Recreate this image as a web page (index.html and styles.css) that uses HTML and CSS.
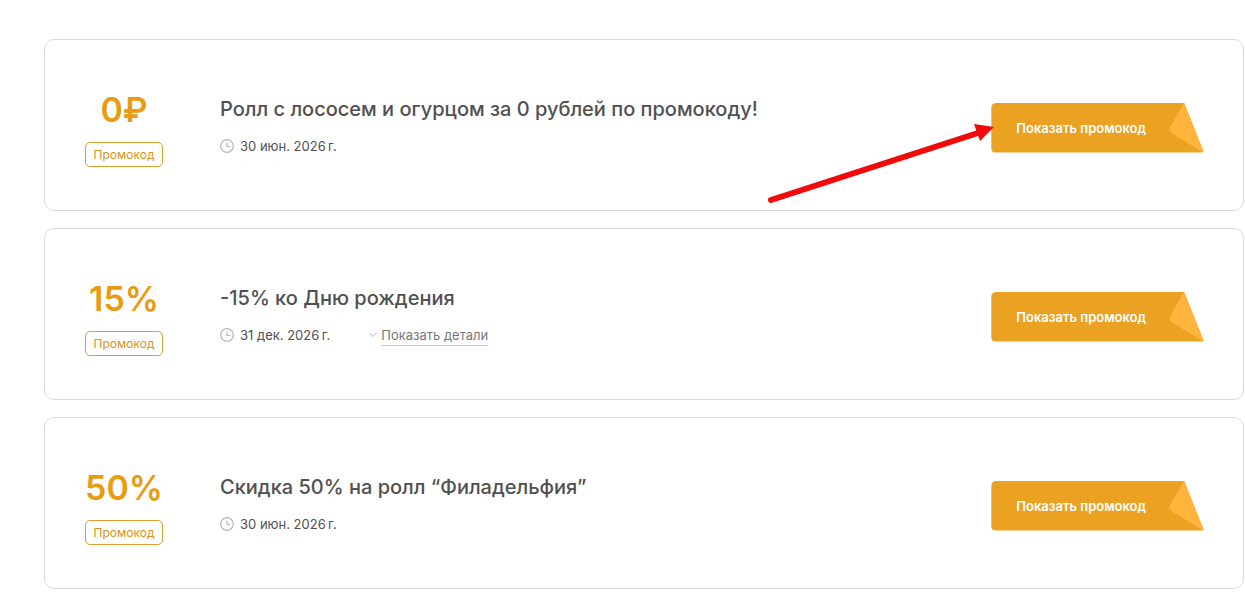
FILE: index.html
```html
<!DOCTYPE html>
<html lang="ru">
	<head>
		<meta charset="utf-8">
		<title>Промокоды</title>
		<link rel="stylesheet" href="styles.css">
	</head>
	<body>
		<main class="coupons">
			<article class="coupon">
				<div class="discount">
					<div class="amount">0₽</div>
					<div class="type">Промокод</div>
				</div>
				<div class="info">
					<h2 class="title">Ролл с лососем и огурцом за 0 рублей по промокоду!</h2>
					<div class="meta">
						<svg class="clock" viewBox="0 0 14 14"><circle cx="7" cy="7" r="6.3"/><path d="M7 3.5V7.5H10"/></svg>
						<span class="date">30 июн. 2026&#8239;г.</span>
					</div>
				</div>
				<div class="action">
					<button class="show" type="button">Показать промокод<svg class="fold" viewBox="0 0 35 50"><path d="M15 0L1 24Q-1 28 4 31L35 50Z"/></svg></button>
					<svg class="arrow" viewBox="0 0 230 84"><path class="line" d="M6 79L216 11"/><path class="head" d="M209 3L229 6L215 20Z"/></svg>
				</div>
			</article>
			<article class="coupon">
				<div class="discount">
					<div class="amount">15%</div>
					<div class="type">Промокод</div>
				</div>
				<div class="info">
					<h2 class="title">-15% ко Дню рождения</h2>
					<div class="meta">
						<svg class="clock" viewBox="0 0 14 14"><circle cx="7" cy="7" r="6.3"/><path d="M7 3.5V7.5H10"/></svg>
						<span class="date">31 дек. 2026&#8239;г.</span>
						<a class="details" href="#"><svg class="chevron" viewBox="0 0 8 6"><path d="M0.5 1L4 4.5L7.5 1"/></svg><span class="underline">Показать детали</span></a>
					</div>
				</div>
				<div class="action">
					<button class="show" type="button">Показать промокод<svg class="fold" viewBox="0 0 35 50"><path d="M15 0L1 24Q-1 28 4 31L35 50Z"/></svg></button>
				</div>
			</article>
			<article class="coupon">
				<div class="discount">
					<div class="amount">50%</div>
					<div class="type">Промокод</div>
				</div>
				<div class="info">
					<h2 class="title">Скидка 50% на ролл “Филадельфия”</h2>
					<div class="meta">
						<svg class="clock" viewBox="0 0 14 14"><circle cx="7" cy="7" r="6.3"/><path d="M7 3.5V7.5H10"/></svg>
						<span class="date">30 июн. 2026&#8239;г.</span>
					</div>
				</div>
				<div class="action">
					<button class="show" type="button">Показать промокод<svg class="fold" viewBox="0 0 35 50"><path d="M15 0L1 24Q-1 28 4 31L35 50Z"/></svg></button>
				</div>
			</article>
		</main>
	</body>
</html>
```
FILE: styles.css
```css
* {
	box-sizing: border-box;
}
body {
	margin: 0;
	background-color: white;
	font-family: Inter, sans-serif;
	color: #505050;
}
.coupons {
	display: flex;
	flex-direction: column;
	gap: 17px;
	padding: 39px 1px 9px 44px;
}
.coupon {
	display: flex;
	align-items: center;
	padding: 48px 39px 43px;
	border: solid 1px #dcdcdc;
	border-radius: 10px;
}
.discount {
	width: 80px;
	margin-right: 56px;
	flex-shrink: 0;
	display: flex;
	flex-direction: column;
	align-items: center;
	gap: 10px;
}
	.amount {
		font-size: 34px;
		font-weight: 600;
		line-height: 44px;
		color: #e99b12;
	}
	.type {
		padding: 0 8px;
		border: solid 1px #e0a030;
		border-radius: 5px;
		font-size: 12px;
		line-height: 23px;
		color: #d99420;
	}
.info {
	flex: 1;
	padding-bottom: 4px;
}
	.title {
		margin: 0 0 13px;
		font-size: 20px;
		font-weight: 450;
		line-height: 28px;
	}
	.meta {
		display: flex;
		align-items: center;
		font-size: 13px;
		line-height: 20px;
	}
	.clock {
		width: 14px;
		height: 14px;
		margin-right: 6px;
		fill: none;
		stroke: #b8b8b8;
		stroke-width: 1.2;
	}
	.details {
		display: flex;
		align-items: center;
		gap: 4px;
		margin-left: 39px;
		color: #777777;
		text-decoration: none;
	}
	.underline {
		border-bottom: solid 1px #c8c8c8;
	}
	.chevron {
		width: 8px;
		height: 6px;
		fill: none;
		stroke: #b0b0b0;
	}
.action {
	position: relative;
	flex-shrink: 0;
}
	.show {
		display: block;
		position: relative;
		height: 50px;
		padding: 0 58px 0 25px;
		border: none;
		border-radius: 5px 0 3px 5px;
		background-color: #eba122;
		clip-path: polygon(0 0, calc(100% - 20px) 0, 100% 100%, 0 100%);
		font-family: inherit;
		font-size: 13px;
		font-weight: 600;
		color: white;
		cursor: pointer;
	}
	.fold {
		position: absolute;
		top: 0;
		right: 0;
		width: 35px;
		height: 50px;
		fill: #ffb53d;
	}
	/* pointer lying over the first card */
	.arrow {
		position: absolute;
		top: 18px;
		right: 209px;
		width: 230px;
		height: 84px;
		pointer-events: none;
	}
	.line {
		fill: none;
		stroke: #f00a0a;
		stroke-width: 6;
		stroke-linecap: round;
	}
	.head {
		fill: #f00a0a;
	}
```
